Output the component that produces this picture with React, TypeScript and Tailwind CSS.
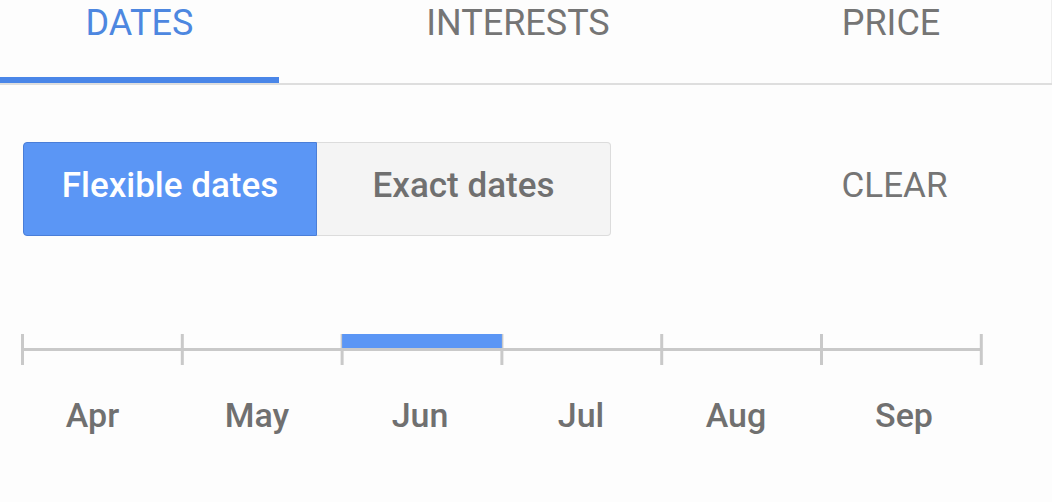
import React from "react";

const tabs = [
  { label: "DATES", width: "w-[279px]", active: true },
  { label: "INTERESTS", width: "w-[478px]", active: false },
  { label: "PRICE", width: "flex-1", active: false },
];

const months = [
  { label: "Apr", shift: "pr-[17px]" },
  { label: "May", shift: "pr-[8px]" },
  { label: "Jun", shift: "pr-[2px]" },
  { label: "Jul", shift: "" },
  { label: "Aug", shift: "pr-[10px]" },
  { label: "Sep", shift: "pl-[6px]" },
];

// Month range slider drawn as svg: track, ticks and the selected month
function MonthTrack() {
  const ticks = [0, 1, 2, 3, 4, 5, 6].map((i) => 1.5 + i * 159.8);
  return (
    <svg width="964" height="31" viewBox="0 0 964 31" className="block">
      <line x1="1.5" y1="15.5" x2="960.3" y2="15.5" stroke="#c9c9c9" strokeWidth="3" />
      {ticks.map((x) => (
        <line key={x} x1={x} y1="0" x2={x} y2="31" stroke="#c9c9c9" strokeWidth="3" />
      ))}
      <rect x={ticks[2]} y="0" width={ticks[3] - ticks[2]} height="14" fill="#5b96f5" />
    </svg>
  );
}

export default function App() {
  return (
    <div
      className="w-[1052px] h-[502px] bg-[#fdfdfd] overflow-hidden"
      style={{ fontFamily: "Roboto, 'Liberation Sans', sans-serif" }}
    >
      {/* tab bar */}
      <div className="flex border-r border-[#eeeeee]">
        {tabs.map((tab) => (
          <div key={tab.label} className={`${tab.width} h-[83px] flex flex-col`}>
            <div
              className={`flex-1 text-center text-[36px] leading-[36px] pt-[5px] ${
                tab.active ? "text-[#4d87e0]" : "text-[#757575]"
              } ${tab.label === "PRICE" ? "pr-[26px]" : ""}`}
            >
              {tab.label}
            </div>
            {tab.active && <div className="h-[6px] bg-[#4a86e8]" />}
          </div>
        ))}
      </div>
      <div className="h-[2px] bg-[#dedede]" />

      {/* date mode toggle */}
      <div className="flex items-center mt-[57px] pl-[23px]">
        <div className="flex h-[94px]">
          <button className="w-[294px] pb-[8px] rounded-l-[4px] border border-[#4a7ed8] bg-[#5b96f5] text-white text-[35px] leading-none font-medium">
            Flexible dates
          </button>
          <button className="w-[294px] pb-[8px] rounded-r-[4px] border border-l-0 border-[#dcdcdc] bg-[#f4f4f4] text-[#707070] text-[35px] leading-none font-medium">
            Exact dates
          </button>
        </div>
        <div className="flex-1 text-center pl-[126px] pb-[8px] text-[35px] leading-none text-[#757575]">
          CLEAR
        </div>
      </div>

      {/* month slider */}
      <div className="mt-[98px] pl-[21px]">
        <MonthTrack />
        <div className="grid grid-cols-6 w-[960px] mt-[33px]">
          {months.map((m) => (
            <div
              key={m.label}
              className={`text-center text-[34px] leading-none font-medium text-[#707070] ${m.shift}`}
            >
              {m.label}
            </div>
          ))}
        </div>
      </div>
    </div>
  );
}
